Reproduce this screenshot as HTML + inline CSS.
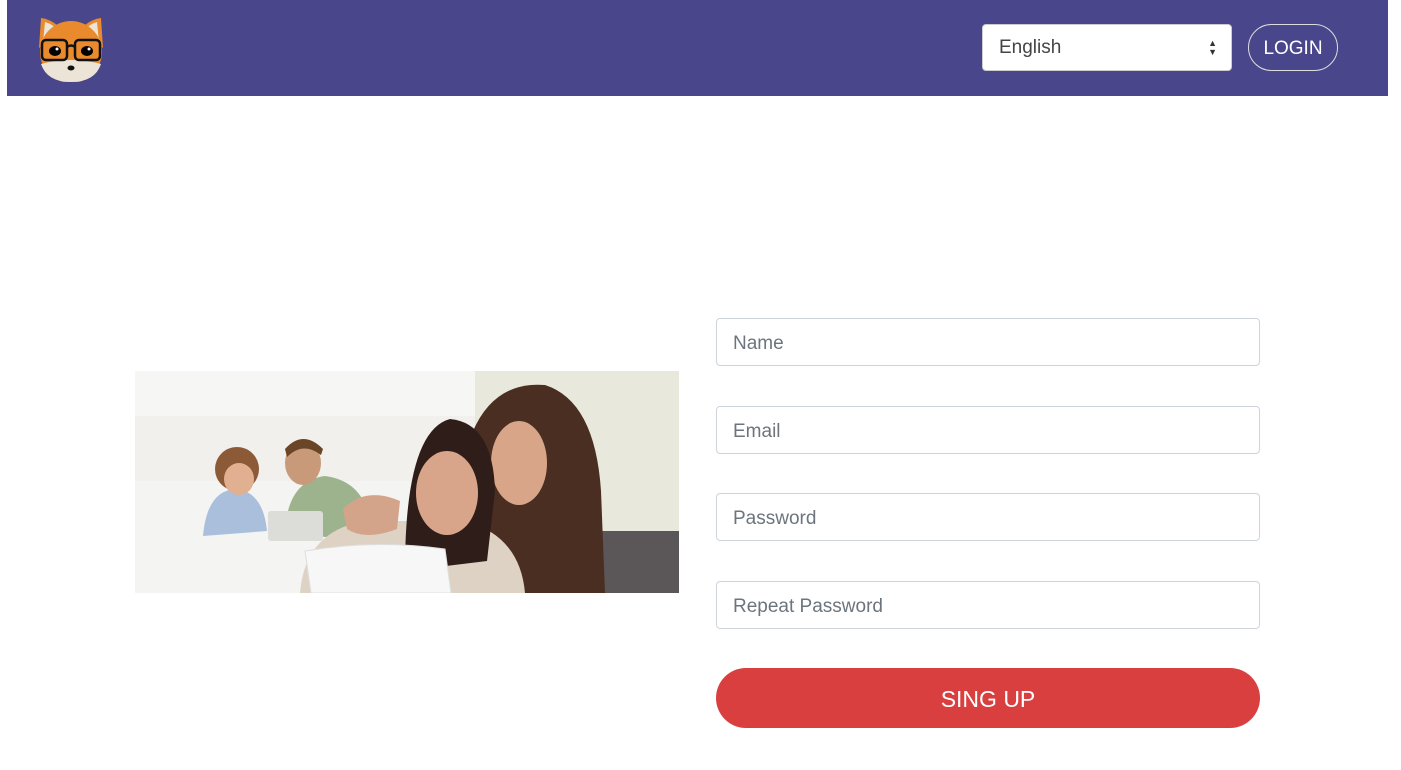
<!DOCTYPE html>
<html><head><meta charset="utf-8"><style>
*{box-sizing:border-box;margin:0;padding:0}
body{width:1401px;height:770px;background:#fff;font-family:"Segoe UI","Liberation Sans",sans-serif;position:relative;overflow:hidden}
.hdr{position:absolute;left:7px;top:0;width:1381px;height:96px;background:#4a468c}
.sel{position:absolute;left:982px;top:24px;width:250px;height:47px;background:#fff;border:1px solid #ccc;border-radius:4px;font-size:19px;color:#444;padding:0 16px;line-height:46px}
.sel span{position:absolute;right:14px;top:14px;font-size:9px;line-height:9px;color:#333}
.login{position:absolute;left:1248px;top:24px;width:90px;height:47px;border:1px solid #ddd;border-radius:24px;color:#fff;font-size:19px;text-align:center;line-height:47px}
.inp{position:absolute;left:716px;width:544px;height:48px;border:1px solid #ced4da;border-radius:4px;font-size:19px;color:#6c757d;padding:0 16px;line-height:50px}
.btn{position:absolute;left:716px;top:668px;width:544px;height:60px;background:#da3f3f;border-radius:30px;color:#fff;font-size:23px;text-align:center;line-height:63px}
</style></head><body>
<div class="hdr">
<svg style="position:absolute;left:28px;top:14px" width="72" height="68" viewBox="0 0 72 68">
<path d="M4 34 L6 4 Q20 6 28 18 Z" fill="#e98a2d"/><path d="M8 28 L10 8 Q18 10 24 18 Z" fill="#ece4d6"/>
<path d="M68 34 L66 4 Q52 6 44 18 Z" fill="#e98a2d"/><path d="M64 28 L62 8 Q54 10 48 18 Z" fill="#ece4d6"/>
<circle cx="36" cy="38" r="31" fill="#e98a2d"/>
<path d="M6 50 Q36 42 66 50 Q60 68 36 68 Q12 68 6 50Z" fill="#ece4d6"/>
<rect x="7" y="26" width="25" height="20" rx="4" fill="none" stroke="#111" stroke-width="2.5"/>
<rect x="40" y="26" width="25" height="20" rx="4" fill="none" stroke="#111" stroke-width="2.5"/>
<path d="M32 33 Q36 30 40 33" stroke="#111" stroke-width="2.5" fill="none"/>
<ellipse cx="20" cy="37" rx="6" ry="5" fill="#000"/><ellipse cx="52" cy="37" rx="6" ry="5" fill="#000"/>
<circle cx="22" cy="35" r="1.5" fill="#fff"/><circle cx="54" cy="35" r="1.5" fill="#fff"/>
<ellipse cx="36" cy="54" rx="3.5" ry="2.5" fill="#111"/>
</svg>
</div>
<div class="sel">English<span>▲<br>▼</span></div>
<div class="login">LOGIN</div>
<svg style="position:absolute;left:135px;top:371px" width="544" height="222" viewBox="0 0 544 222">
<rect width="544" height="222" fill="#f1f0ec"/>
<rect width="340" height="45" fill="#f6f6f5"/>
<rect x="340" width="204" height="160" fill="#e9e8dc"/>
<rect y="110" width="300" height="112" fill="#f4f4f2"/>
<rect x="462" y="160" width="82" height="62" fill="#5b5758"/>
<ellipse cx="102" cy="98" rx="22" ry="22" fill="#8c5a36"/>
<path d="M68 165 Q72 120 100 118 Q128 120 132 160 Z" fill="#a9bfdc"/>
<ellipse cx="104" cy="108" rx="15" ry="16" fill="#e0b090"/>
<path d="M150 162 Q152 110 190 105 Q228 110 235 150 L232 170 Z" fill="#9cb38d"/>
<ellipse cx="168" cy="92" rx="18" ry="22" fill="#c89a7a"/>
<path d="M150 78 Q168 58 188 78 L186 84 Q168 70 152 86Z" fill="#6a4528"/>
<rect x="133" y="140" width="55" height="30" fill="#dcdcd8" rx="3"/>
<path d="M350 222 L338 60 Q360 10 410 14 Q460 30 466 120 L470 222 Z" fill="#4a2e22"/>
<ellipse cx="384" cy="92" rx="28" ry="42" fill="#d8a589"/>
<path d="M165 222 Q170 160 230 150 L330 150 Q385 165 390 222Z" fill="#ddd2c4"/>
<path d="M270 200 Q270 60 315 48 Q358 52 360 120 L352 190 Z" fill="#2e1d18"/>
<ellipse cx="312" cy="122" rx="31" ry="42" fill="#d9a58a"/>
<path d="M208 138 Q230 115 265 130 L262 158 Q230 170 212 158Z" fill="#d4a48a"/>
<path d="M170 180 Q240 168 310 178 L316 222 L176 222 Z" fill="#f7f7f8" stroke="#dedede"/>
</svg>
<div class="inp" style="top:318px">Name</div>
<div class="inp" style="top:406px">Email</div>
<div class="inp" style="top:493px">Password</div>
<div class="inp" style="top:581px">Repeat Password</div>
<div class="btn">SING UP</div>
</body></html>
